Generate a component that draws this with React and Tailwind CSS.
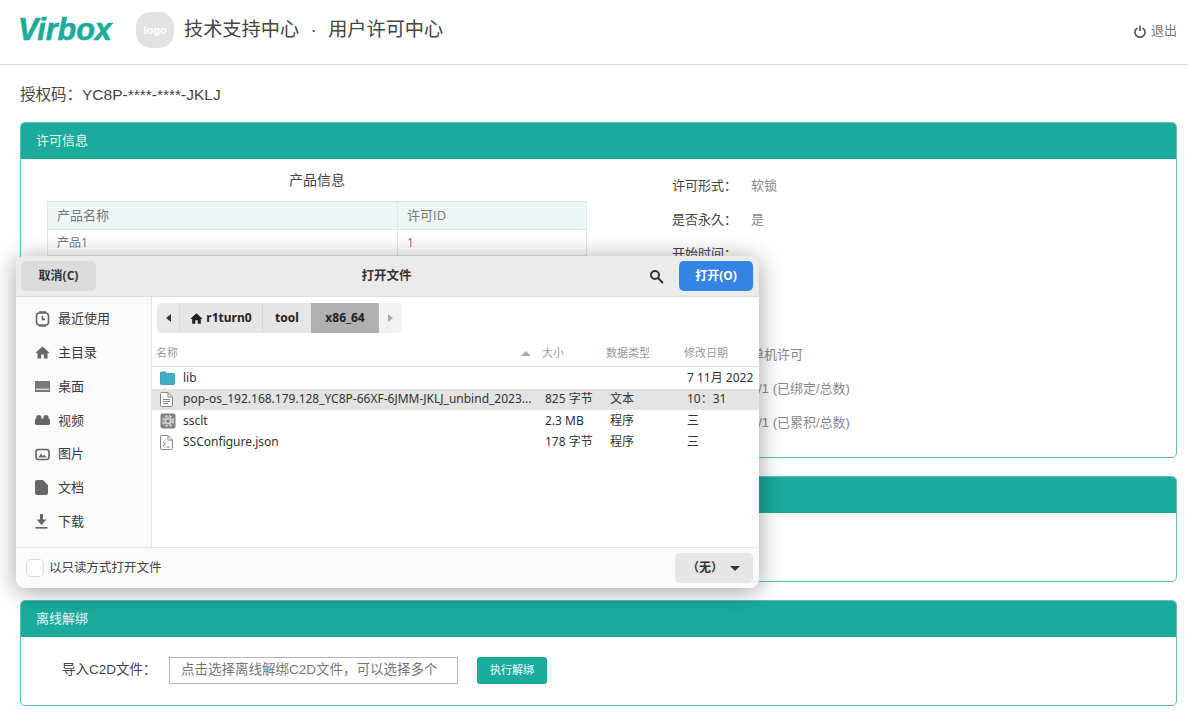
import React from 'react';

const CJK = '"Noto Sans CJK SC"';

// Gtk file chooser sidebar icons
const RecentIcon = () => (
  <svg width="15" height="16" viewBox="0 0 15 16" fill="none" stroke="#666" strokeWidth="1.6">
    <rect x="1.5" y="2" width="12" height="12" rx="3" />
    <path d="M7.5 5v3.4h2.6" />
    <path d="M4 1h7M4 15h7" />
  </svg>
);
const HomeIcon = ({ size = 15, color = '#666' }) => (
  <svg width={size} height={size} viewBox="0 0 15 15" fill={color}>
    <path d="M7.5 1.5 0.8 7.6l.8.9L2.5 7.8V13.5h3.6V9.5h2.8v4h3.6V7.8l.9.7.8-.9z" />
  </svg>
);
const DesktopIcon = () => (
  <svg width="15" height="11" viewBox="0 0 15 11">
    <rect x="0" y="0" width="15" height="11" fill="#777" />
    <rect x="1" y="7.6" width="13" height="1.4" fill="#ddd" />
  </svg>
);
const VideoIcon = () => (
  <svg width="15" height="10" viewBox="0 0 15 10" fill="#666">
    <circle cx="3.8" cy="2.6" r="2.6" />
    <circle cx="11" cy="2.6" r="2.6" />
    <rect x="0" y="3.6" width="15" height="6.4" rx="1.4" />
  </svg>
);
const PictureIcon = () => (
  <svg width="15" height="13" viewBox="0 0 15 13" fill="none">
    <rect x="1" y="1.5" width="13" height="10" rx="2.5" stroke="#666" strokeWidth="1.6" />
    <path d="M3.5 9.5 6 5.5l2 2.4 1.4-1.2 2.2 2.8z" fill="#666" />
  </svg>
);
const DocIcon = () => (
  <svg width="13" height="15" viewBox="0 0 13 15" fill="#666">
    <path d="M2 0h6l5 5v8a2 2 0 0 1-2 2H2a2 2 0 0 1-2-2V2a2 2 0 0 1 2-2z" />
  </svg>
);
const DownloadIcon = () => (
  <svg width="13" height="15" viewBox="0 0 13 15" fill="#666">
    <path d="M5 0h3v5.5h3.4L6.5 11 1.6 5.5H5z" />
    <rect x="0.5" y="13" width="12" height="1.6" />
  </svg>
);
const FolderIcon = () => (
  <svg width="15" height="14" viewBox="0 0 15 14">
    <path d="M1.5 1h4l1.4 1.6h6.6a1 1 0 0 1 1 1v8.9a1 1 0 0 1-1 1h-12a1 1 0 0 1-1-1V2a1 1 0 0 1 1-1z" fill="#3bb0c6" stroke="#2b8fa6" strokeWidth="0.8" />
  </svg>
);
const FileIcon = ({ children }) => (
  <svg width="13" height="15" viewBox="0 0 13 15" fill="none" stroke="#888">
    <path d="M1.5.5h6.5l4.5 4.5v8.5a1 1 0 0 1-1 1h-10a1 1 0 0 1-1-1v-12a1 1 0 0 1 1-1z" fill="#fafafa" />
    <path d="M8 .5V5h4.5" />
    {children}
  </svg>
);
const GearIcon = () => (
  <svg width="16" height="16" viewBox="0 0 16 16">
    <rect x="0.5" y="0.5" width="15" height="15" rx="2" fill="#808080" />
    <circle cx="8" cy="8" r="5" fill="none" stroke="#d8d8d8" strokeWidth="2" strokeDasharray="2.4 1.6" />
    <circle cx="8" cy="8" r="3.6" fill="#d8d8d8" />
    <circle cx="8" cy="8" r="1.7" fill="#777" />
  </svg>
);

const sidebarItems = [
  { icon: <RecentIcon />, name: '最近使用' },
  { icon: <HomeIcon />, name: '主目录' },
  { icon: <DesktopIcon />, name: '桌面' },
  { icon: <VideoIcon />, name: '视频' },
  { icon: <PictureIcon />, name: '图片' },
  { icon: <DocIcon />, name: '文档' },
  { icon: <DownloadIcon />, name: '下载' },
];

const files = [
  { icon: <FolderIcon />, name: 'lib', size: '', type: '', date: '7 11月 2022' },
  {
    icon: <FileIcon><path d="M3 7.5h7M3 9.5h7M3 11.5h5" /></FileIcon>,
    name: 'pop-os_192.168.179.128_YC8P-66XF-6JMM-JKLJ_unbind_2023...',
    size: '825 字节',
    type: '文本',
    date: '10：31',
    selected: true,
  },
  { icon: <GearIcon />, name: 'ssclt', size: '2.3 MB', type: '程序', date: '三' },
  { icon: <FileIcon><path d="M3 7l2.5 2L3 11M6.5 12h3" /></FileIcon>, name: 'SSConfigure.json', size: '178 字节', type: '程序', date: '三' },
];

const licenseRows = [
  ['许可形式：', '软锁'],
  ['是否永久：', '是'],
  ['开始时间：', ''],
  ['', ''],
  ['', ''],
  ['', '单机许可'],
  ['', '0/1 (已绑定/总数)'],
  ['', '0/1 (已累积/总数)'],
];

const Card = ({ title, className, children }) => (
  <div className={`border border-[#5cc0b3] rounded-[5px] overflow-hidden mb-[18px] ${className}`}>
    <div className="h-[36px] bg-[#1aab9c] px-[15px] flex items-center text-[13px] text-[#e8f7f5]">{title}</div>
    {children}
  </div>
);

const FileDialog = () => (
  <div
    className="absolute left-[16px] top-[256px] w-[743px] h-[332px] flex flex-col rounded-[9px] overflow-hidden bg-white shadow-[0_3px_24px_rgba(0,0,0,0.38)] text-[#2e3436]"
    style={{ fontFamily: `"Noto Sans", ${CJK}, sans-serif` }}
  >
    <div className="h-[41px] shrink-0 bg-[#ebebeb] border-b border-[#dcdcdc] flex items-center pl-[5px] pr-[6px]">
      <button className="w-[75px] h-[30px] rounded-[5px] bg-[#dcdcdc] text-[12px] font-bold text-[#333]">取消(C)</button>
      <div className="flex-1 text-center pl-[28px] text-[12.5px] font-bold text-[#333]">打开文件</div>
      <svg className="mr-[15px]" width="15" height="15" viewBox="0 0 15 15" fill="none" stroke="#333" strokeWidth="2">
        <circle cx="6" cy="6" r="4" />
        <path d="M9 9l5 5" />
      </svg>
      <button className="w-[74px] h-[30px] rounded-[5px] bg-[#3584e4] text-[12px] font-bold text-white">打开(O)</button>
    </div>

    <div className="flex-1 flex min-h-0">
      <div className="w-[136px] shrink-0 bg-[#fafafa] border-r border-[#e4e4e4] pt-[5px]">
        {sidebarItems.map((item) => (
          <div key={item.name} className="h-[33.8px] flex items-center text-[13px] text-[#3a3a3a]">
            <div className="w-[42px] pl-[19px] flex items-center">{item.icon}</div>
            {item.name}
          </div>
        ))}
      </div>

      <div className="flex-1 min-w-0">
        <div className="px-[5px] pt-[6px] pb-[6px]">
          <div className="w-[245px] h-[30px] flex items-stretch rounded-[5px] bg-[#f2f2f2] text-[12px] font-bold text-[#222] overflow-hidden">
            <div className="w-[23px] bg-[#e9e9e9] border-r border-[#dadada] flex items-center justify-center">
              <div className="border-y-[4px] border-y-transparent border-r-[5px] border-r-[#333]" />
            </div>
            <div className="w-[83px] bg-[#e6e6e6] border-r border-[#d8d8d8] flex items-center justify-center gap-[3px]">
              <HomeIcon size={13} color="#222" />
              r1turn0
            </div>
            <div className="w-[48px] bg-[#e6e6e6] flex items-center justify-center">tool</div>
            <div className="w-[68px] bg-[#b0b0b0] flex items-center justify-center">x86_64</div>
            <div className="flex-1 flex items-center justify-center">
              <div className="border-y-[4px] border-y-transparent border-l-[5px] border-l-[#aaa]" />
            </div>
          </div>
        </div>
        <div className="h-[28px] flex items-center border-b border-[#dcdcdc] text-[11px] text-[#999] pl-[4px] pt-[2px]">
          <div className="w-[386px] flex items-center justify-between pr-[11px]">
            <span>名称</span>
            <div className="border-x-[5px] border-x-transparent border-b-[5px] border-b-[#aaa]" />
          </div>
          <div className="w-[64px]">大小</div>
          <div className="w-[78px]">数据类型</div>
          <div>修改日期</div>
        </div>
        {files.map((file) => (
          <div
            key={file.name}
            className={`h-[21.5px] flex items-center text-[12px] ${file.selected ? 'bg-[#e3e3e3]' : ''}`}
          >
            <div className="w-[31px] pl-[8px] flex items-center">{file.icon}</div>
            <div className="w-[362px] whitespace-nowrap overflow-hidden">{file.name}</div>
            <div className="w-[65px] whitespace-nowrap">{file.size}</div>
            <div className="w-[77px]">{file.type}</div>
            <div className="whitespace-nowrap">{file.date}</div>
          </div>
        ))}
      </div>
    </div>

    <div className="h-[41px] shrink-0 bg-[#fafafa] border-t border-[#e4e4e4] flex items-center pl-[10px] pr-[6px]">
      <div className="w-[18px] h-[18px] rounded-[5px] border border-[#dcdcdc] bg-white mr-[5px]" />
      <span className="text-[12.5px] text-[#444]">以只读方式打开文件</span>
      <div className="ml-auto w-[78px] h-[30px] rounded-[5px] bg-[#e6e6e6] flex items-center justify-between pl-[12px] pr-[13px] text-[12px] font-bold text-[#333]">
        <span>（无）</span>
        <div className="border-x-[5px] border-x-transparent border-t-[5px] border-t-[#333]" />
      </div>
    </div>
  </div>
);

const App = () => (
  <div
    className="relative w-[1188px] h-[713px] overflow-hidden bg-white text-[#444]"
    style={{ fontFamily: `"Liberation Sans", ${CJK}, sans-serif` }}
  >
    <header className="h-[65px] border-b border-[#d9d9d9] flex items-center pl-[18px] pr-[11px]">
      <div className="w-[118px] text-[30.5px] leading-none font-bold italic text-[#1aab9c] [-webkit-text-stroke:0.6px_#1aab9c] -mt-[5px]">Virbox</div>
      <div className="w-[38px] h-[36px] rounded-[15px] bg-[#e2e2e2] flex items-center justify-center text-[11px] font-bold text-white -mt-[4px]">logo</div>
      <div className="ml-[10px] text-[19.2px] leading-none text-[#444] -mt-[4px] flex">
        <span>技术支持中心</span>
        <span className="w-[29px] text-center">·</span>
        <span>用户许可中心</span>
      </div>
      <div className="ml-auto -mt-[2px] flex items-center gap-[5px] text-[13px] text-[#777]">
        <svg width="12" height="13" viewBox="0 0 12 13" fill="none" stroke="#555" strokeWidth="1.7">
          <path d="M3.4 3a5 5 0 1 0 5.2 0M6 .5v5.5" />
        </svg>
        退出
      </div>
    </header>

    <div className="pl-[20px] pr-[11px]">
      <div className="h-[57px] pt-[19px] text-[15.5px] leading-[22px] text-[#444]">授权码：YC8P-****-****-JKLJ</div>

      <Card title="许可信息" className="h-[336px]">
        <div className="flex">
          <div className="w-[592px] pl-[26px]">
            <div className="w-[540px] h-[42px] flex items-center justify-center text-[14px] text-[#444]">产品信息</div>
            <table
              className="w-[540px] table-fixed border-collapse text-[13px] text-[#777]"
              style={{ fontFamily: `"Open Sans", ${CJK}, sans-serif` }}
            >
              <thead>
                <tr className="h-[28px] bg-[#eef6f5]">
                  <th className="w-[350px] border border-[#dfe6ee] pl-[9px] text-left font-normal">产品名称</th>
                  <th className="border border-[#dfe6ee] pl-[9px] text-left font-normal">许可ID</th>
                </tr>
              </thead>
              <tbody>
                <tr className="h-[26px] text-[12px]">
                  <td className="border border-[#dfe6ee] pl-[9px]">产品1</td>
                  <td className="border border-[#dfe6ee] pl-[9px]">1</td>
                </tr>
              </tbody>
            </table>
          </div>
          <div className="pl-[59px] pt-[10px]">
            {licenseRows.map(([label, value], i) => (
              <div key={i} className="h-[33.8px] flex items-center text-[13px]">
                <div className="w-[79px] text-[#444]">{label}</div>
                <div className="text-[#888] whitespace-nowrap">{value}</div>
              </div>
            ))}
          </div>
        </div>
      </Card>

      <Card className="h-[106px]" />

      <Card title="离线解绑" className="h-[106px]">
        <div className="flex items-center pl-[41px] pt-[20px]">
          <div className="w-[107px] text-[13.5px] text-[#444] whitespace-nowrap">导入C2D文件：</div>
          <div className="w-[289px] h-[27px] border border-[#b5b5b5] flex items-center pl-[11px] text-[13.5px] text-[#777] whitespace-nowrap">
            点击选择离线解绑C2D文件，可以选择多个
          </div>
          <button className="ml-[19px] w-[70px] h-[27px] rounded-[3px] bg-[#1aab9c] text-[11px] text-white">执行解绑</button>
        </div>
      </Card>
    </div>

    <FileDialog />
  </div>
);

export default App;
